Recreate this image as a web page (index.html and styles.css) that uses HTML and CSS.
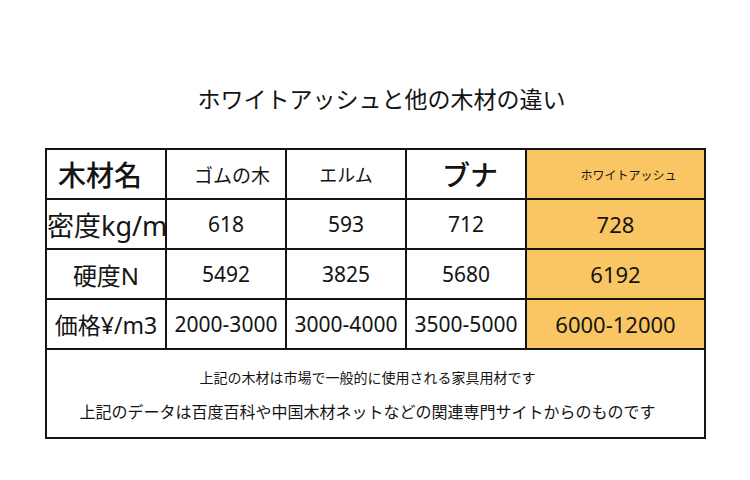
FILE: index.html
```html
<!DOCTYPE html>
<html lang="ja">
<head>
<meta charset="utf-8">
<link rel="stylesheet" href="styles.css">
</head>
<body>
<div class="page">
  <h1 class="title">ホワイトアッシュと他の木材の違い</h1>
  <table class="wood">
    <colgroup>
      <col class="c1"><col class="c2"><col class="c3"><col class="c4"><col class="c5">
    </colgroup>
    <tr>
      <th class="h-big h-name">木材名</th>
      <th class="h-gomu">ゴムの木</th>
      <th class="h-elm">エルム</th>
      <th class="h-big h-buna">ブナ</th>
      <th class="hl h-ash">ホワイトアッシュ</th>
    </tr>
    <tr>
      <td class="label l-dens">密度kg/m</td>
      <td>618</td><td>593</td><td>712</td><td class="hl">728</td>
    </tr>
    <tr>
      <td class="label">硬度N</td>
      <td>5492</td><td>3825</td><td>5680</td><td class="hl">6192</td>
    </tr>
    <tr>
      <td class="label l-price">価格¥/m3</td>
      <td>2000-3000</td><td>3000-4000</td><td>3500-5000</td><td class="hl">6000-12000</td>
    </tr>
    <tr>
      <td class="foot" colspan="5">
        <p class="note1">上記の木材は市場で一般的に使用される家具用材です</p>
        <p class="note2">上記のデータは百度百科や中国木材ネットなどの関連専門サイトからのものです</p>
      </td>
    </tr>
  </table>
</div>
</body>
</html>
```
FILE: styles.css
```css
html, body {
  margin: 0;
  padding: 0;
  background: #fff;
}
body {
  font-family: "Noto Sans", "Noto Sans CJK JP", sans-serif;
  color: #141414;
}
.page {
  width: 750px;
  height: 480px;
  padding-top: 84px;
  box-sizing: border-box;
}
.title {
  margin: 0 0 36px 0;
  padding-left: 13px;
  font-size: 23px;
  line-height: 28px;
  font-weight: 400;
  text-align: center;
  font-family: "Noto Sans CJK JP", sans-serif;
}
.wood {
  margin-left: 45px;
  width: 659px;
  table-layout: fixed;
  border-collapse: collapse;
  border: 2px solid #141414;
}
.c1, .c2, .c3, .c4 { width: 120px; }
.c5 { width: 179px; }
.wood th, .wood td {
  border: 2px solid #141414;
  height: 48px;
  padding: 0;
  text-align: center;
  vertical-align: middle;
  white-space: nowrap;
  font-weight: 400;
  font-size: 21px;
}
.wood th {
  font-family: "Noto Sans CJK JP", sans-serif;
}
.wood .hl {
  background: #fac663;
  font-size: 22px;
}
.wood .h-big {
  font-size: 28px;
  font-weight: 500;
}
.wood .h-name {
  padding-right: 12px;
}
.wood .h-buna {
  padding-left: 8px;
}
.wood .h-gomu {
  font-size: 19px;
  padding-left: 12px;
}
.wood .h-elm {
  font-size: 18px;
}
.wood .h-ash {
  font-size: 12px;
  padding-left: 26px;
}
.wood .label {
  font-size: 24px;
  font-family: "Noto Sans", "Noto Sans CJK JP", sans-serif;
}
.wood .l-dens {
  font-size: 27px;
  text-align: left;
  overflow: visible;
}
.wood .l-price {
  font-size: 23px;
}
.wood .foot {
  height: 70px;
  vertical-align: top;
  padding: 17px 16px 0 0;
  font-family: "Noto Sans CJK JP", sans-serif;
}
.note1 {
  margin: 0 0 11px 0;
  font-size: 14px;
  line-height: 20px;
}
.note2 {
  margin: 0;
  font-size: 16px;
  line-height: 26px;
}
```
